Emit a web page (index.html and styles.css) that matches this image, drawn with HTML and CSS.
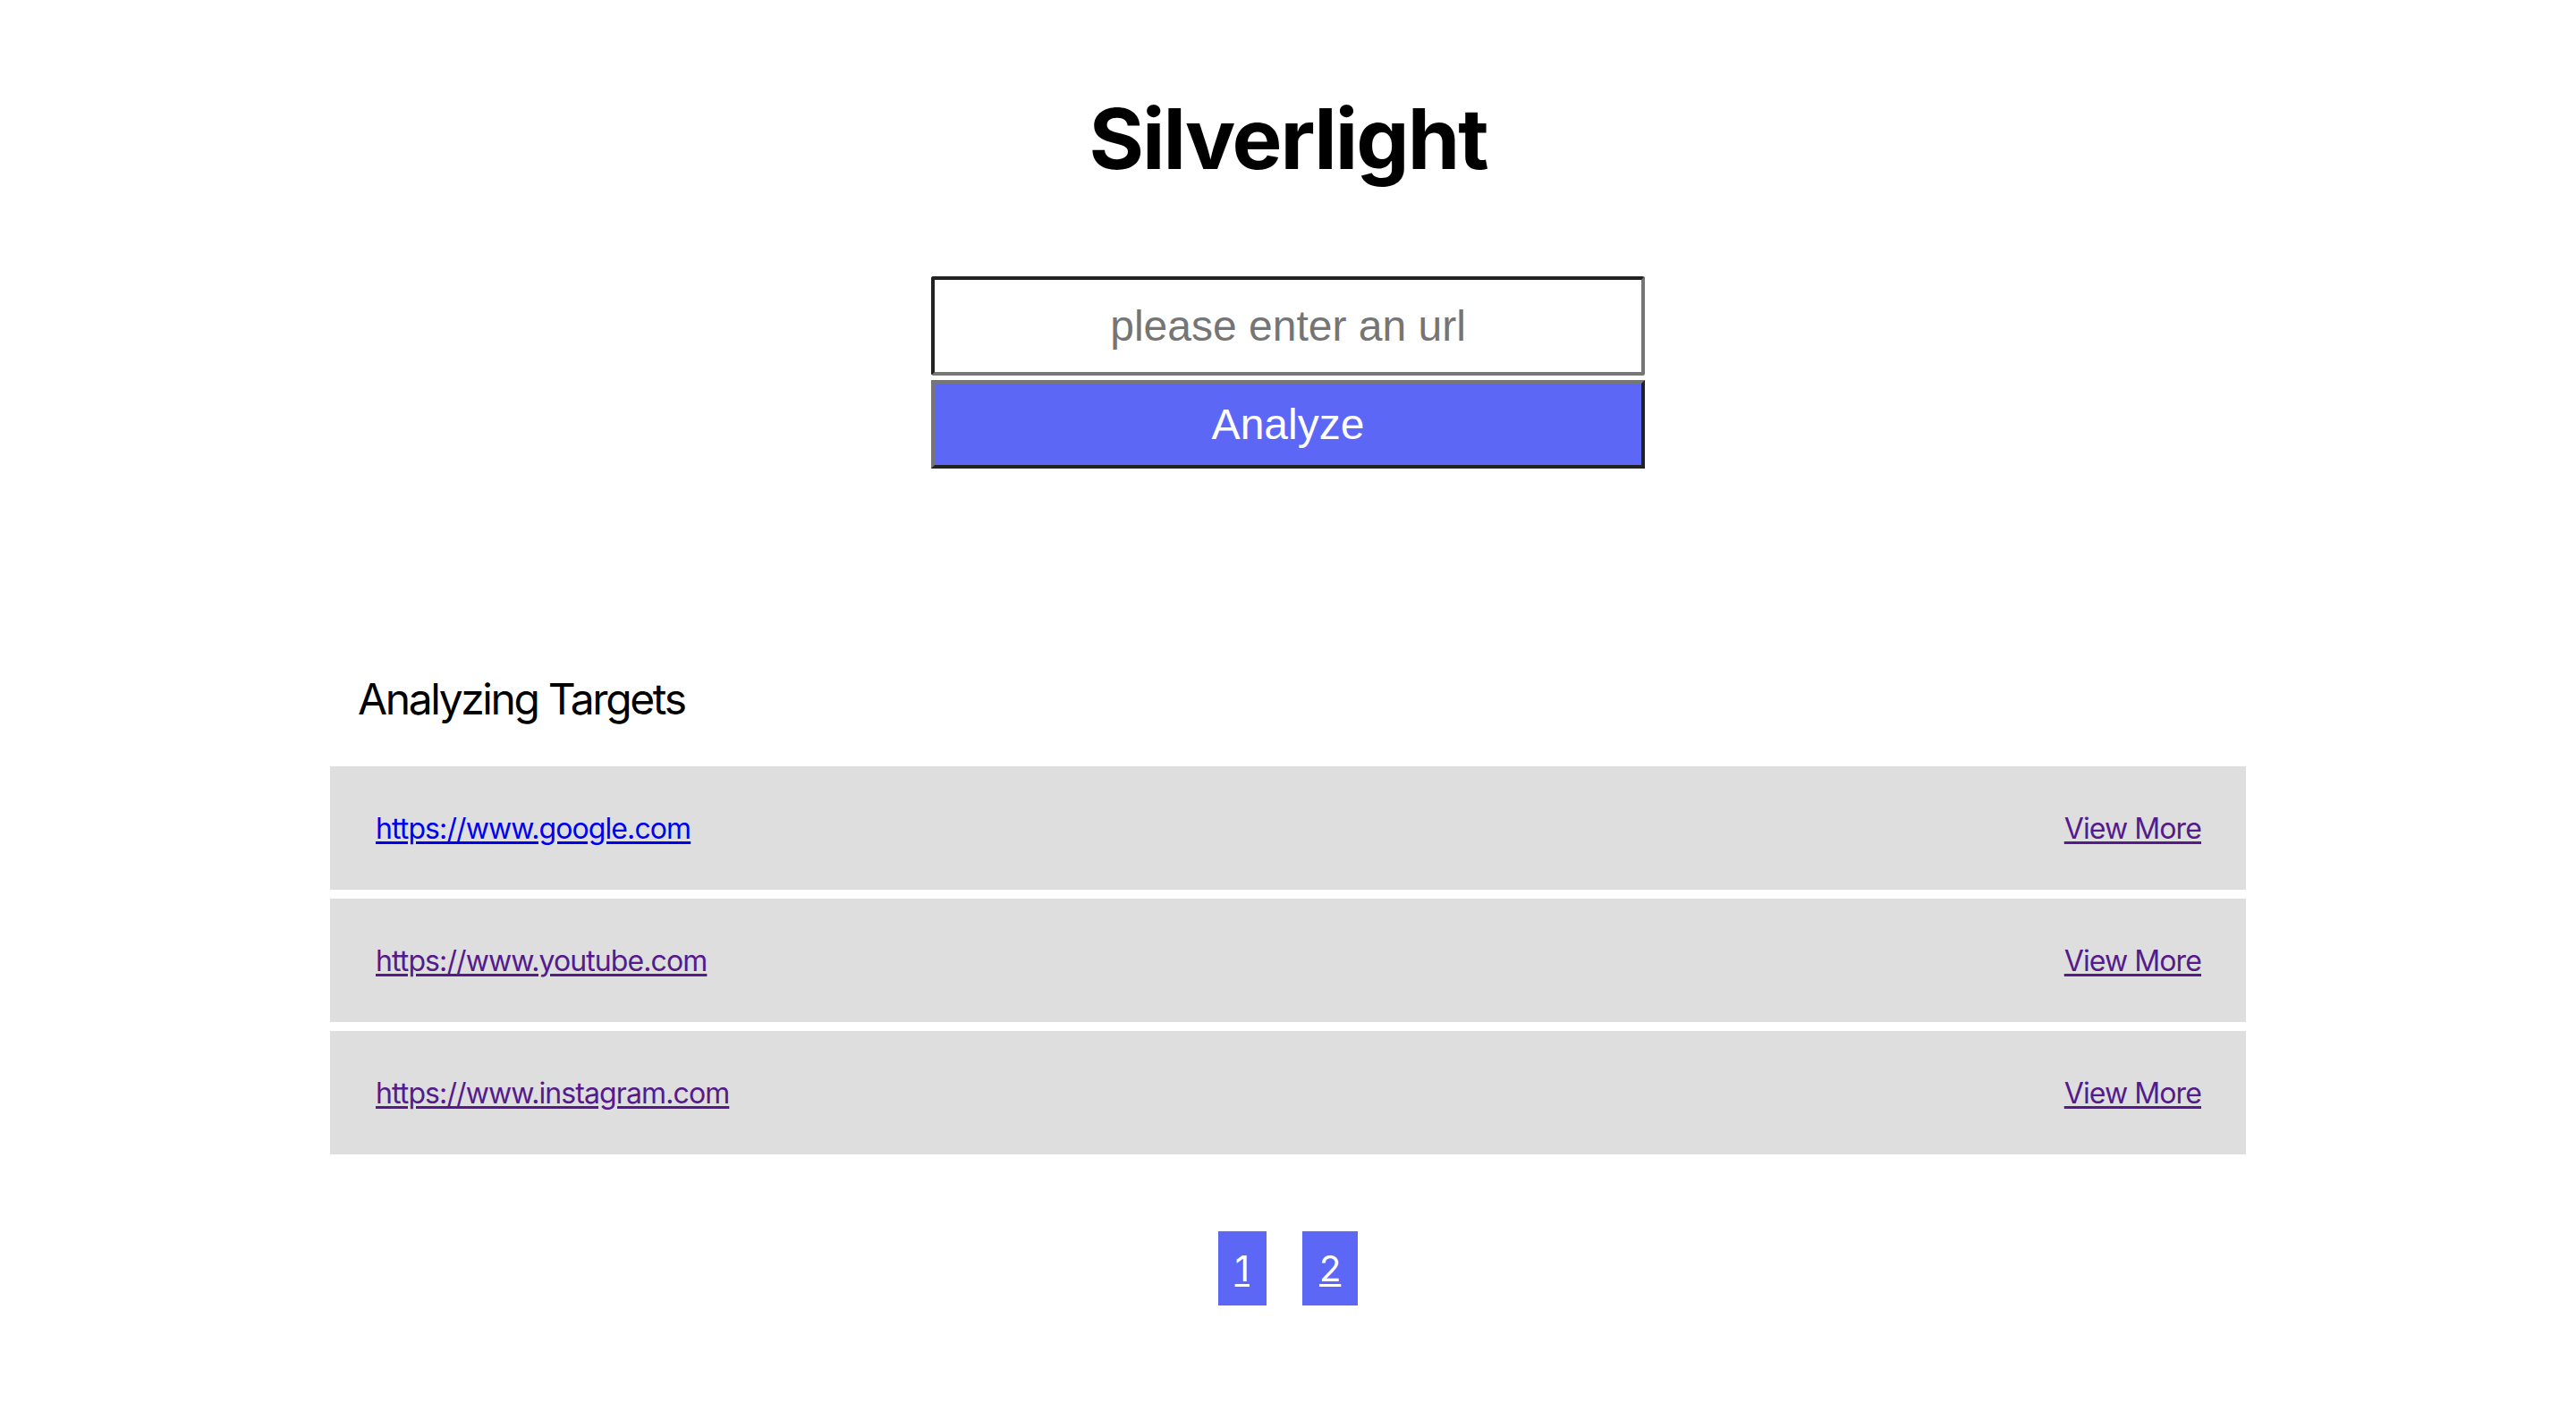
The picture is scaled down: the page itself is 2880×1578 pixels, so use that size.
FILE: index.html
```html
<!DOCTYPE html>
<html lang="en">
<head>
<meta charset="utf-8">
<title>Silverlight</title>
<link rel="stylesheet" href="styles.css">
</head>
<body>
<main class="page">
  <h1 class="title">Silverlight</h1>
  <form class="search" onsubmit="return false;">
    <input class="search-input" type="text" placeholder="please enter an url">
    <button class="search-button" type="submit">Analyze</button>
  </form>
  <section class="targets">
    <h2 class="targets-title">Analyzing Targets</h2>
    <ul class="target-list">
      <li class="target-row">
        <a class="link link-new" href="#google">https://www.google.com</a>
        <a class="link link-visited" href="#more1">View More</a>
      </li>
      <li class="target-row">
        <a class="link link-visited" href="#youtube">https://www.youtube.com</a>
        <a class="link link-visited" href="#more2">View More</a>
      </li>
      <li class="target-row">
        <a class="link link-visited" href="#instagram">https://www.instagram.com</a>
        <a class="link link-visited" href="#more3">View More</a>
      </li>
    </ul>
    <nav class="pager">
      <a class="pager-item" href="#p1">1</a>
      <a class="pager-item" href="#p2">2</a>
    </nav>
  </section>
</main>
</body>
</html>
```

FILE: styles.css
```css
html, body {
  margin: 0;
  padding: 0;
  background: #ffffff;
}

body {
  font-family: Inter, "Noto Sans", sans-serif;
  color: #000000;
}

.page {
  display: flex;
  flex-direction: column;
  align-items: center;
  padding-top: 98px;
}

.title {
  margin: 0;
  font-family: Inter, "Liberation Sans", sans-serif;
  font-weight: 700;
  font-size: 94px;
  line-height: 114px;
  letter-spacing: -2px;
  color: #000000;
}

.search {
  margin-top: 97px;
  display: flex;
  flex-direction: column;
  gap: 5px;
  width: 798px;
}

.search-input {
  box-sizing: border-box;
  width: 100%;
  height: 111px;
  margin: 0;
  padding: 0 24px;
  border-style: solid;
  border-width: 4px;
  border-color: #222222 #767676 #767676 #222222;
  border-radius: 3px;
  background: #ffffff;
  font-family: "Liberation Sans", Arial, sans-serif;
  font-size: 48px;
  text-align: center;
  color: #000000;
  outline: none;
}

.search-input::placeholder {
  color: #757575;
  opacity: 1;
}

.search-button {
  box-sizing: border-box;
  width: 100%;
  height: 99px;
  margin: 0;
  padding: 0;
  border-style: solid;
  border-width: 4px;
  border-color: #767676 #222222 #222222 #767676;
  background: #5c67f6;
  font-family: "Liberation Sans", Arial, sans-serif;
  font-size: 48px;
  color: #ffffff;
}

.targets {
  width: 2142px;
  margin-top: 229px;
  display: flex;
  flex-direction: column;
}

.targets-title {
  margin: 0;
  padding-left: 31px;
  font-family: Inter, "Noto Sans", sans-serif;
  font-weight: 400;
  font-size: 48px;
  line-height: 58px;
  letter-spacing: -2.4px;
  color: #000000;
}

.target-list {
  list-style: none;
  margin: 46px 0 0 0;
  padding: 0;
  display: flex;
  flex-direction: column;
  gap: 10px;
}

.target-row {
  box-sizing: border-box;
  height: 138px;
  padding: 0 50px 0 51px;
  display: flex;
  align-items: center;
  justify-content: space-between;
  background: #dedede;
  font-size: 32px;
  line-height: 39px;
  letter-spacing: -0.9px;
}

.link {
  text-decoration: underline;
  text-decoration-thickness: 3px;
  text-underline-offset: 3px;
}

.link-new {
  color: #0000ee;
}

.link-visited {
  color: #551a8b;
}

.pager {
  margin-top: 86px;
  display: flex;
  justify-content: center;
  gap: 40px;
}

.pager-item {
  display: block;
  padding: 17px 19px;
  background: #5c67f6;
  color: #ffffff;
  font-size: 40px;
  line-height: 49px;
  text-decoration: underline;
  text-decoration-thickness: 3px;
  text-underline-offset: 3px;
}
```
